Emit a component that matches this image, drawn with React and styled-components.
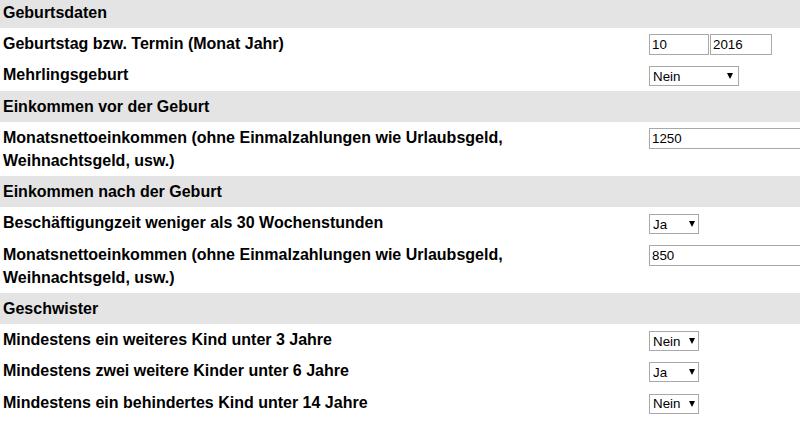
import React from 'react'
import styled, { createGlobalStyle } from 'styled-components'

const GlobalStyle = createGlobalStyle`
  html, body {
    margin: 0;
    padding: 0;
    background: #fff;
    overflow: hidden;
  }
  body {
    font-family: "Liberation Sans", Arial, sans-serif;
    color: #000;
  }
`

const sections = [
  {
    title: 'Geburtsdaten',
    rows: [
      { label: 'Geburtstag bzw. Termin (Monat Jahr)', type: 'date', month: '10', year: '2016' },
      { label: 'Mehrlingsgeburt', type: 'select', value: 'Nein', options: ['Nein', 'Ja'], size: 'wide' },
    ],
  },
  {
    title: 'Einkommen vor der Geburt',
    rows: [
      {
        label: 'Monatsnettoeinkommen (ohne Einmalzahlungen wie Urlaubsgeld, Weihnachtsgeld, usw.)',
        type: 'text',
        value: '1250',
      },
    ],
  },
  {
    title: 'Einkommen nach der Geburt',
    rows: [
      { label: 'Beschäftigungzeit weniger als 30 Wochenstunden', type: 'select', value: 'Ja', options: ['Ja', 'Nein'] },
      {
        label: 'Monatsnettoeinkommen (ohne Einmalzahlungen wie Urlaubsgeld, Weihnachtsgeld, usw.)',
        type: 'text',
        value: '850',
      },
    ],
  },
  {
    title: 'Geschwister',
    rows: [
      { label: 'Mindestens ein weiteres Kind unter 3 Jahre', type: 'select', value: 'Nein', options: ['Nein', 'Ja'] },
      { label: 'Mindestens zwei weitere Kinder unter 6 Jahre', type: 'select', value: 'Ja', options: ['Ja', 'Nein'] },
      { label: 'Mindestens ein behindertes Kind unter 14 Jahre', type: 'select', value: 'Nein', options: ['Nein', 'Ja'] },
    ],
  },
]

const Control = ({ row }) => {
  if (row.type === 'date') {
    return (
      <DateGroup>
        <Field defaultValue={row.month} $width={60} />
        <Field defaultValue={row.year} $width={62} />
      </DateGroup>
    )
  }
  if (row.type === 'select') {
    return (
      <SelectWrap $wide={row.size === 'wide'}>
        <Select defaultValue={row.value}>
          {row.options.map(o => (
            <option key={o}>{o}</option>
          ))}
        </Select>
      </SelectWrap>
    )
  }
  return <Field defaultValue={row.value} $width={175} />
}

const App = () => {
  return (
    <Page>
      <GlobalStyle />
      <Form>
        {sections.map(section => (
          <React.Fragment key={section.title}>
            <SectionHeader>{section.title}</SectionHeader>
            {section.rows.map((row, i) => (
              <Row key={i}>
                <Label>{row.label}</Label>
                <Cell>
                  <Control row={row} />
                </Cell>
              </Row>
            ))}
          </React.Fragment>
        ))}
      </Form>
    </Page>
  )
}

export default App

const Page = styled.div`
  width: 800px;
  height: 428px;
  overflow: hidden;
`
const Form = styled.div`
  margin-top: -3px;
  display: flex;
  flex-direction: column;
`
const SectionHeader = styled.div`
  background: #e4e4e4;
  font-size: 16px;
  font-weight: bold;
  line-height: 23.2px;
  padding: 4px 3px 4px;
`
const Row = styled.div`
  display: grid;
  grid-template-columns: 649px 1fr;
  padding: 4px 0;
`
const Label = styled.div`
  font-size: 16px;
  font-weight: bold;
  line-height: 23.2px;
  padding-left: 3px;
  padding-right: 140px;
`
const Cell = styled.div`
  display: flex;
  align-items: flex-start;
  padding-top: 2px;
  min-width: 0;
`
const DateGroup = styled.div`
  display: flex;
  gap: 1px;
`
const Field = styled.input`
  box-sizing: border-box;
  width: ${p => p.$width}px;
  flex: none;
  height: 21px;
  margin: 0;
  padding: 0 2px;
  border: 1px solid #a9a9a9;
  font-family: "Liberation Sans", Arial, sans-serif;
  font-size: 13.33px;
  color: #000;
  background: #fff;
  outline: none;
`
const SelectWrap = styled.div`
  position: relative;
  width: ${p => (p.$wide ? 90 : 50)}px;
  margin-top: 1px;
  &::after {
    content: '';
    position: absolute;
    right: ${p => (p.$wide ? 6 : 4)}px;
    top: 7px;
    border-left: 3.5px solid transparent;
    border-right: 3.5px solid transparent;
    border-top: 6px solid #000;
    pointer-events: none;
  }
`
const Select = styled.select`
  appearance: none;
  -webkit-appearance: none;
  box-sizing: border-box;
  width: 100%;
  height: 20px;
  margin: 0;
  padding: 0 0 0 3px;
  border: 1px solid #a9a9a9;
  border-radius: 0;
  background: #fff;
  font-family: "Liberation Sans", Arial, sans-serif;
  font-size: 13.33px;
  color: #000;
  outline: none;
`
